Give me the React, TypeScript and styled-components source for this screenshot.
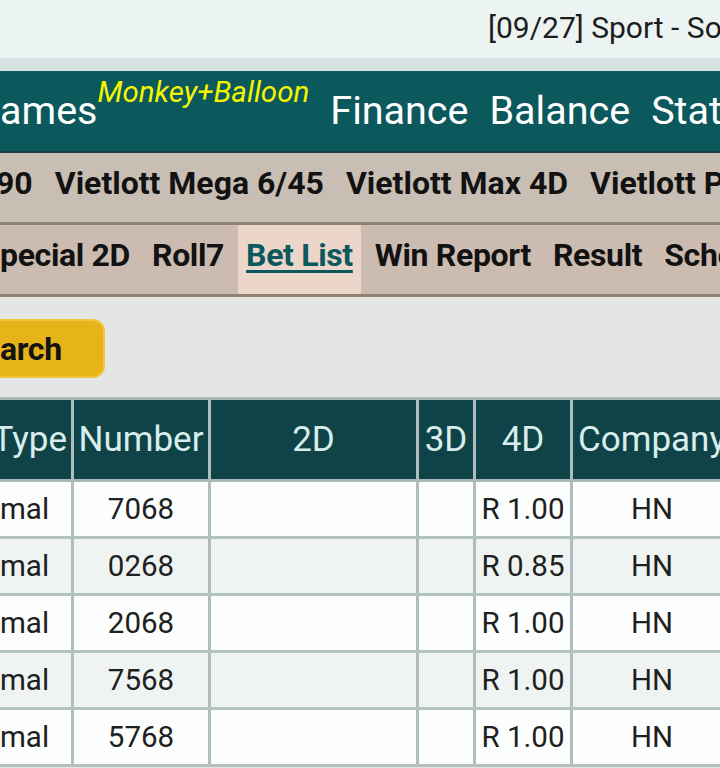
import React from "react";
import styled, { createGlobalStyle } from "styled-components";

const GlobalStyle = createGlobalStyle`
  html, body {
    margin: 0;
    padding: 0;
    background: #e4e6e5;
  }
  body {
    width: 720px;
    overflow: hidden;
    font-family: Roboto, "Noto Sans", "Liberation Sans", sans-serif;
  }
`;

const COLUMNS = "74px 137px 208px 57px 97px 161px";

const Page = styled.div`
  display: flex;
  flex-direction: column;
  min-height: 768px;
  background: #e4e6e5;
`;

const TopBar = styled.div`
  height: 54px;
  display: flex;
  align-items: center;
  padding: 0 0 4px 488px;
  background: #ebf4f3;
  border-bottom: 13px solid #d6e2e1;
  overflow: hidden;
  white-space: nowrap;
`;

const Ticker = styled.span`
  font-size: 30px;
  color: #1d1d1d;
`;

const MainNav = styled.nav`
  height: 80px;
  display: flex;
  gap: 21px;
  background: #0b585d;
  border-bottom: 2px solid #1c3d3f;
  overflow: hidden;
  white-space: nowrap;
`;

const MainLink = styled.a`
  flex-shrink: 0;
  font-size: 39.5px;
  line-height: 80px;
  color: #ffffff;
`;

const Promo = styled.sup`
  margin-left: 0;
  font-size: 29.5px;
  font-style: italic;
  line-height: 1;
  vertical-align: 22px;
  color: #f4f500;
`;

const MenuBar = styled.nav<{ $tone: string; $tight?: boolean; $scroll?: number }>`
  height: 69px;
  display: flex;
  gap: 6px;
  background: ${(p) => p.$tone};
  border-bottom: 3px solid #8f8270;
  overflow: hidden;
  white-space: nowrap;
  letter-spacing: ${(p) => (p.$tight ? "-0.35px" : "0")};

  & > a:first-child {
    padding-left: 0;
    margin-left: ${(p) => -(p.$scroll ?? 0)}px;
  }
`;

const MenuItem = styled.a<{ $active?: boolean }>`
  flex-shrink: 0;
  display: flex;
  align-items: center;
  padding: 0 8px 9px;
  font-size: 32px;
  font-weight: 700;
  color: ${(p) => (p.$active ? "#0b585d" : "#121212")};
  background: ${(p) => (p.$active ? "#ecd6c9" : "transparent")};
  text-decoration: ${(p) => (p.$active ? "underline" : "none")};
  text-decoration-thickness: 3px;
  text-underline-offset: 4px;
`;

const Toolbar = styled.div`
  display: flex;
  padding: 22px 0 19px;
`;

const SearchButton = styled.button`
  height: 59px;
  padding: 0 41px 0 0;
  font-family: inherit;
  font-size: 32px;
  font-weight: 700;
  letter-spacing: -0.35px;
  color: #141414;
  background: #e6b319;
  border: 2px solid #f1c53a;
  border-left: none;
  border-radius: 0 12px 12px 0;
`;

const BetTable = styled.div`
  width: 734px;
  border-top: 3px solid #a9b9b9;
`;

const Row = styled.div<{ $head?: boolean; $alt?: boolean }>`
  display: grid;
  grid-template-columns: ${COLUMNS};
  height: ${(p) => (p.$head ? 82 : 57)}px;
  box-sizing: border-box;
  border-bottom: 3px solid ${(p) => (p.$head ? "#a9b9b9" : "#b4c1c1")};
  background: ${(p) => (p.$head ? "#0f4347" : p.$alt ? "#eff4f3" : "#fcfefd")};
  color: ${(p) => (p.$head ? "#d9eeec" : "#202020")};
  font-size: ${(p) => (p.$head ? 35 : 29.5)}px;
`;

const Cell = styled.div<{ $align?: "start" | "center" | "end" }>`
  display: flex;
  align-items: center;
  justify-content: ${(p) =>
    p.$align === "start" ? "flex-start" : p.$align === "end" ? "flex-end" : "center"};
  padding: 0 4px 0 ${(p) => (p.$align === "start" ? 0 : 4)}px;
  border-right: 3px solid #afbdbd;
  overflow: hidden;
  white-space: nowrap;
`;

const bets = [
  { type: "mal", number: "7068", d4: "R 1.00", company: "HN" },
  { type: "mal", number: "0268", d4: "R 0.85", company: "HN" },
  { type: "mal", number: "2068", d4: "R 1.00", company: "HN" },
  { type: "mal", number: "7568", d4: "R 1.00", company: "HN" },
  { type: "mal", number: "5768", d4: "R 1.00", company: "HN" },
];

const games = ["90", "Vietlott Mega 6/45", "Vietlott Max 4D", "Vietlott Power 6/55"];
const tabs = ["pecial 2D", "Roll7", "Bet List", "Win Report", "Result", "Schedule"];

export default function App() {
  return (
    <Page>
      <GlobalStyle />
      <TopBar>
        <Ticker>[09/27] Sport - Soccer</Ticker>
      </TopBar>

      <MainNav>
        <MainLink>
          ames<Promo>Monkey+Balloon</Promo>
        </MainLink>
        <MainLink>Finance</MainLink>
        <MainLink>Balance</MainLink>
        <MainLink>Statement</MainLink>
      </MainNav>

      <MenuBar $tone="#c8beb4" $scroll={4}>
        {games.map((g) => (
          <MenuItem key={g}>{g}</MenuItem>
        ))}
      </MenuBar>

      <MenuBar $tone="#cbbbb1" $tight>
        {tabs.map((t) => (
          <MenuItem key={t} $active={t === "Bet List"}>
            {t}
          </MenuItem>
        ))}
      </MenuBar>

      <Toolbar>
        <SearchButton>arch</SearchButton>
      </Toolbar>

      <BetTable>
        <Row $head>
          <Cell $align="end">Type</Cell>
          <Cell>Number</Cell>
          <Cell>2D</Cell>
          <Cell>3D</Cell>
          <Cell>4D</Cell>
          <Cell>Company</Cell>
        </Row>
        {bets.map((b, i) => (
          <Row key={b.number} $alt={i % 2 === 1}>
            <Cell $align="start">{b.type}</Cell>
            <Cell>{b.number}</Cell>
            <Cell />
            <Cell />
            <Cell>{b.d4}</Cell>
            <Cell>{b.company}</Cell>
          </Row>
        ))}
      </BetTable>
    </Page>
  );
}
